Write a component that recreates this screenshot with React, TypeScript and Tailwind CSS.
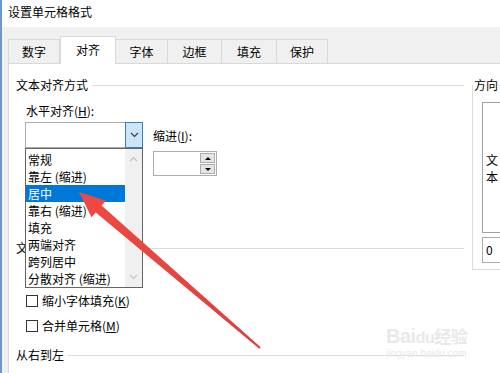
const items = ['常规', '靠左 (缩进)', '居中', '靠右 (缩进)', '填充', '两端对齐', '跨列居中', '分散对齐 (缩进)'];

const tabs = [
  { label: '数字', w: 'w-[52px]' },
  { label: '对齐', w: 'w-[56px]', active: true },
  { label: '字体', w: 'w-[52px]' },
  { label: '边框', w: 'w-[54px]' },
  { label: '填充', w: 'w-[55px]' },
  { label: '保护', w: 'w-[51px]' },
];

function Chevron({ up, className }: { up?: boolean; className?: string }) {
  return (
    <svg width="9" height="6" viewBox="0 0 9 6" className={className}>
      <polyline
        points={up ? '1,5 4.5,1.5 8,5' : '1,1 4.5,4.5 8,1'}
        fill="none"
        stroke="currentColor"
        strokeWidth="1.1"
      />
    </svg>
  );
}

function GroupTitle({ text }: { text: string }) {
  return (
    <div className="flex items-center h-[14px] leading-[14px]">
      <span>{text}</span>
      <div className="flex-1 h-px bg-[#dcdcdc] ml-[4px]" />
    </div>
  );
}

function Check({ children }: { children: React.ReactNode }) {
  return (
    <div className="flex items-center h-[14px] leading-[14px] pl-[10px]">
      <div className="w-[12px] h-[12px] border border-[#333] bg-white" />
      <span className="ml-[4px]">{children}</span>
    </div>
  );
}

export default function App() {
  return (
    <div className="relative w-[500px] h-[373px] overflow-hidden flex flex-col bg-[#f0f0f0] border-l-2 border-[#6c97c6] text-[12px] text-black font-['Noto_Sans_CJK_SC','Microsoft_YaHei',sans-serif]">
      {/* title */}
      <div className="h-[27px] shrink-0 bg-white flex items-center pl-[6px] pb-[3px] text-[12px]">设置单元格格式</div>

      {/* tabs */}
      <div className="h-[36px] shrink-0 flex items-end pl-[6px]">
        {tabs.map(t =>
          t.active ? (
            <div key={t.label} className={`${t.w} h-[28px] -mb-px relative z-10 bg-white border-t border-x border-[#d9d9d9] flex items-center justify-center pb-[2px]`}>
              {t.label}
            </div>
          ) : (
            <div key={t.label} className={`${t.w} h-[24px] border-t border-r border-[#d9d9d9] first:border-l flex items-center justify-center`}>
              {t.label}
            </div>
          )
        )}
      </div>

      {/* panel */}
      <div className="flex-1 ml-[6px] bg-white border-t border-l border-[#d9d9d9] flex">
        <div className="w-[455px] shrink-0 pl-[7px] flex flex-col">
          <div className="mt-[14px]"><GroupTitle text="文本对齐方式" /></div>
          <div className="mt-[12px] pl-[10px] h-[14px] leading-[14px]">水平对齐(<u>H</u>):</div>

          <div className="mt-[4px] flex pl-[9px]">
            <div className="relative w-[118px] h-[26px] flex">
              <div className="flex-1 border-y border-l border-[#adadad] bg-white" />
              <div className="w-[18px] border border-[#3d7fb5] bg-[#cce4f7] flex items-center justify-center text-[#3a3a3a]">
                <Chevron />
              </div>

              {/* open dropdown list */}
              <div className="absolute left-0 top-full w-[118px] h-[140px] border border-[#646464] bg-white flex z-20">
                <div className="flex-1 pt-[2px]">
                  {items.map((it, i) => (
                    <div
                      key={it}
                      className={`h-[17px] leading-[17px] pl-[2px] whitespace-nowrap ${i === 2 ? 'bg-[#0078d7] text-white' : ''}`}
                    >
                      {it}
                    </div>
                  ))}
                </div>
                <div className="w-[17px] bg-[#f0f0f0] flex flex-col items-center justify-between py-[7px] text-[#c2c2c2]">
                  <Chevron up />
                  <Chevron />
                </div>
              </div>
            </div>

            <div className="ml-[10px] flex flex-col">
              <div className="mt-[7px] h-[14px] leading-[14px]">缩进(<u>I</u>):</div>
              <div className="mt-[8px] w-[64px] h-[25px] border border-[#adadad] flex justify-end items-center pr-px">
                <div className="w-[15px] flex flex-col gap-px">
                  <div className="h-[10px] bg-[#e5e5e5] border border-[#adadad] flex items-center justify-center">
                    <div className="w-0 h-0 border-x-[3px] border-x-transparent border-b-[3px] border-b-black" />
                  </div>
                  <div className="h-[10px] bg-[#e5e5e5] border border-[#adadad] flex items-center justify-center">
                    <div className="w-0 h-0 border-x-[3px] border-x-transparent border-t-[3px] border-t-black" />
                  </div>
                </div>
              </div>
            </div>
          </div>

          <div className="mt-[65px]"><GroupTitle text="文本控制" /></div>
          {/* row hidden under the open list */}
          <div className="mt-[14px] h-[14px]" />
          <div className="mt-[11px]"><Check>缩小字体填充(<u>K</u>)</Check></div>
          <div className="mt-[11px]"><Check>合并单元格(<u>M</u>)</Check></div>
          <div className="mt-[15px]"><GroupTitle text="从右到左" /></div>
        </div>

        <div className="ml-[8px] mt-[14px]">
          <fieldset className="border border-[#dcdcdc] pb-[6px] pr-0 w-[140px]">
            <legend className="px-px h-[14px] leading-[14px]">方向</legend>
            <div className="ml-[9px] mt-[10px] w-[120px] h-[131px] border border-[#a0a0a0] flex flex-col justify-center pl-[3px] leading-[17px]">
              <div>文</div>
              <div>本</div>
            </div>
            <div className="ml-[9px] mt-[4px] w-[120px] h-[26px] border border-[#adadad] flex items-center pl-[3px]">0</div>
          </fieldset>
        </div>
      </div>

      {/* watermark */}
      <div className="absolute left-[384px] top-[326px] text-[#e9e9e9] leading-none pointer-events-none">
        <div className="text-[20px] font-bold font-['Liberation_Sans',sans-serif] tracking-tight">Bai<span className="text-[16px]">du</span><span className="text-[17px] font-['Noto_Sans_CJK_SC',sans-serif]">经验</span></div>
        <div className="text-[10px] mt-[3px] font-['Liberation_Sans',sans-serif]">jingyan.baidu.com</div>
      </div>

      {/* red arrow */}
      <svg className="absolute left-0 top-0 pointer-events-none z-30" width="500" height="373" viewBox="0 0 500 373">
        <defs>
          <linearGradient id="ar" x1="77" y1="192" x2="258" y2="348" gradientUnits="userSpaceOnUse">
            <stop offset="0" stopColor="#ef4a42" />
            <stop offset="1" stopColor="#d8413e" />
          </linearGradient>
        </defs>
        <polygon
          points="77,192 104,200.7 99.6,205.6 258.7,347.2 257.3,348.8 93.8,212.4 89.5,217.3"
          fill="url(#ar)"
        />
      </svg>
    </div>
  );
}
